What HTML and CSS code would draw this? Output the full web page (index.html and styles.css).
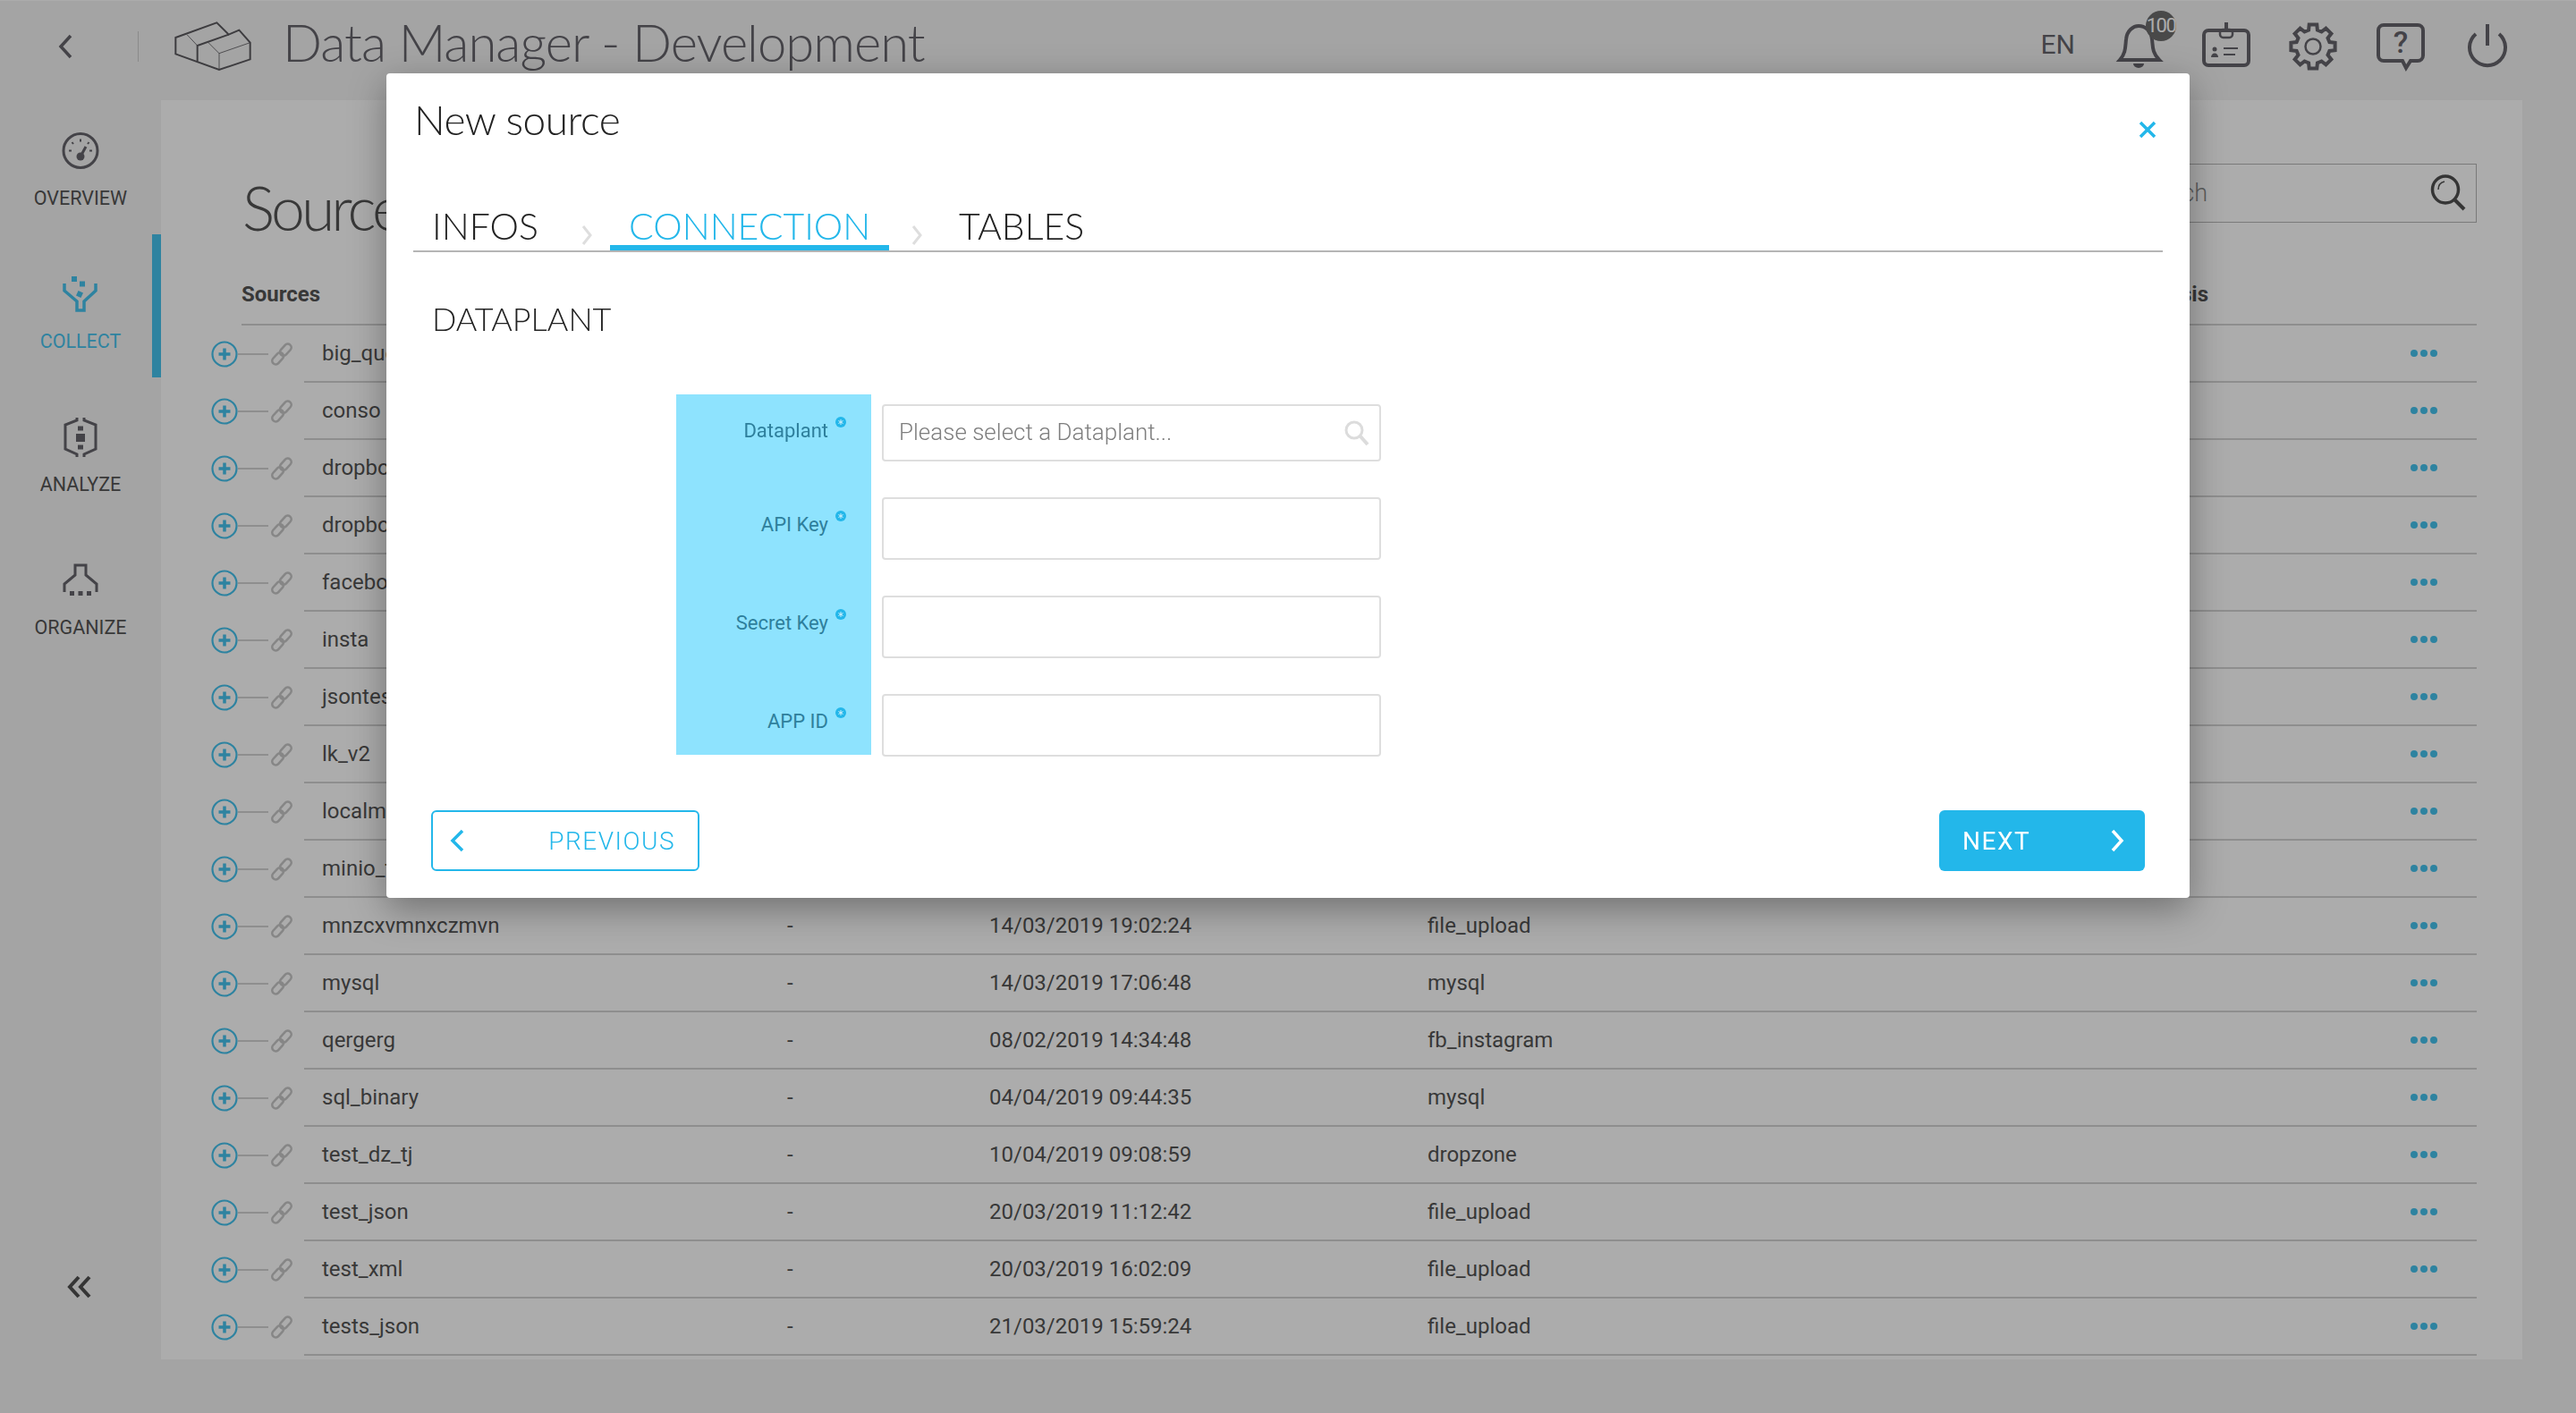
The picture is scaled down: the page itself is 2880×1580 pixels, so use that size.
FILE: index.html
```html
<!DOCTYPE html>
<html lang="en">
<head>
  <meta charset="UTF-8" />
  <title>Data Manager - Development</title>
  <link rel="stylesheet" href="styles.css">
</head>
<body>

  <svg class="defs" width="0" height="0">
    <symbol id="plus" viewBox="0 0 30 30">
      <circle cx="15" cy="15" r="13.500" fill="none" stroke="#23b7ea" stroke-width="2.200" />
      <path d="M15 8.500v13M8.500 15h13" stroke="#23b7ea" stroke-width="3.500" />
    </symbol>
    <symbol id="link" viewBox="0 0 26 26">
      <g transform="rotate(42 13 13)" fill="none" stroke="#bdbdbd" stroke-width="2.600">
        <rect x="9" y="-1" width="8" height="15" rx="4" />
        <rect x="9" y="12" width="8" height="15" rx="4" />
      </g>
    </symbol>
    <symbol id="req" viewBox="0 0 12 12">
      <circle cx="6" cy="6" r="6" fill="#23b7ea" />
      <path d="M6 3v6M3.400 4.500l5.200 3M3.400 7.500l5.200-3" stroke="#cfeffb" stroke-width="1" />
    </symbol>
  </svg>

  <header class="topbar">
    <svg class="back" width="18" height="28" viewBox="0 0 18 28"><path d="M15 2 4 14l11 12" fill="none" stroke="#49474f" stroke-width="3.500" /></svg>
    <span class="topbar-sep"></span>
    <svg class="logo" width="100" height="70" viewBox="0 0 300 210" fill="none" stroke="#3c3a40">
      <path d="M22 75 160 25l40 40 35-15 37 42v56l-104 35-146-53Z" stroke-width="6" />
      <path d="M95 155V102L200 65" stroke-width="6" />
      <path d="M60 65l35 37M130 90l38 38v55M168 128l104-36" stroke-width="2.500" />
    </svg>
    <h1 class="app-title">Data Manager - Development</h1>
    <span class="lang">EN</span>
    <div class="topbar-icons">
      <div class="bell">
        <svg width="60" height="60" viewBox="0 0 60 60" fill="none" stroke="#49474f" stroke-width="4">
          <path d="M8 45C15 37 14 30 15 22 16 12 23 7 29 7c7 0 14 5 15 15 1 8 0 15 8 23Z" />
          <path d="M23 49a6 5 0 0 0 12 0Z" fill="#49474f" stroke="none" />
        </svg>
        <span class="bell-badge">100</span>
      </div>
      <svg width="60" height="60" viewBox="0 0 60 60" fill="none" stroke="#49474f" stroke-width="4">
        <rect x="5" y="12" width="50" height="39" rx="5" />
        <path d="M30 3v8" stroke-width="4" />
        <rect x="23" y="11" width="14" height="9" rx="3.500" stroke-width="2.500" />
        <circle cx="17" cy="33" r="2.500" fill="#49474f" stroke="none" />
        <path d="M13 42c0-6 8-6 8 0Z" fill="#49474f" stroke="none" />
        <path d="M27 32h16M27 39h13" stroke-width="2" />
      </svg>
      <svg width="60" height="60" viewBox="-30 -30 60 60">
        <path fill="none" stroke="#49474f" stroke-width="4" d="M-4.900-18.400-4.300-24.600 4.300-24.600 4.900-18.400 9.500-16.500 14.400-20.400 20.400-14.400 16.500-9.500 18.400-4.900 24.600-4.300 24.600 4.300 18.400 4.900 16.500 9.500 20.400 14.400 14.400 20.400 9.500 16.500 4.900 18.400 4.300 24.600-4.300 24.600-4.900 18.400-9.500 16.500-14.400 20.400-20.400 14.400-16.500 9.500-18.400 4.900-24.600 4.300-24.600-4.300-18.400-4.900-16.500-9.500-20.400-14.400-14.400-20.400-9.500-16.500Z" />
        <circle r="8.500" fill="none" stroke="#49474f" stroke-width="2.500" />
      </svg>
      <svg width="60" height="60" viewBox="0 0 60 60" fill="none" stroke="#49474f" stroke-width="4">
        <path d="M12 6h38a6 6 0 0 1 6 6v28a6 6 0 0 1-6 6h-8l-5 8-4-8H12a6 6 0 0 1-6-6V12a6 6 0 0 1 6-6Z" />
        <text class="help-mark" x="31" y="37" text-anchor="middle" fill="#49474f" stroke="none">?</text>
      </svg>
      <svg width="60" height="60" viewBox="0 0 60 60" fill="none" stroke="#49474f" stroke-width="4">
        <path d="M31 5v24" />
        <path d="M18 16a20 20 0 1 0 26 0" />
      </svg>
    </div>
  </header>

  <div class="layout">
    <nav class="sidebar">
      <a class="nav-item">
        <svg width="60" height="60" viewBox="0 0 60 60" fill="none" stroke="#49474f">
          <circle cx="30" cy="28.500" r="19" stroke-width="3" />
          <path d="M20.500 19l1.500 2M30 15.500v3M39.500 19 38 21M17 28.500h3M40 28.500h3" stroke-width="2" />
          <path d="M30 35 36 24" stroke-width="3" />
          <circle cx="30" cy="35" r="4.500" fill="#49474f" stroke="none" />
        </svg>
        <span>OVERVIEW</span>
      </a>
      <a class="nav-item active">
        <svg width="60" height="60" viewBox="0 0 60 60" fill="none" stroke="#23b7ea">
          <path d="M12 17v8l14 12v10h8V37l13-12v-8" stroke-width="3.500" />
          <g fill="#23b7ea" stroke="none">
            <rect x="20" y="9" width="6" height="6" />
            <rect x="29" y="14.500" width="6" height="6" />
            <rect x="26" y="26" width="6" height="6" transform="rotate(25 29 29)" />
          </g>
        </svg>
        <span>COLLECT</span>
      </a>
      <a class="nav-item">
        <svg width="60" height="60" viewBox="0 0 60 60" fill="none" stroke="#49474f" stroke-width="3">
          <path d="M26 7v3l-13 5v27l13 6v3M34 7v3l13 5v27l-13 6v3" />
          <g fill="#49474f" stroke="none">
            <rect x="27" y="16.500" width="6" height="5" />
            <rect x="25" y="25" width="10" height="9" />
            <rect x="27" y="37.500" width="6" height="5" />
          </g>
        </svg>
        <span>ANALYZE</span>
      </a>
      <a class="nav-item">
        <svg width="60" height="60" viewBox="0 0 60 60" fill="none" stroke="#49474f" stroke-width="3">
          <path d="M12 42V33L24 23V12H36V23L48 33V42" />
          <g fill="#49474f" stroke="none">
            <rect x="18" y="41" width="5" height="5" />
            <rect x="27.500" y="41" width="5" height="5" />
            <rect x="37" y="41" width="5" height="5" />
          </g>
        </svg>
        <span>ORGANIZE</span>
      </a>
      <svg class="collapse" width="30" height="26" viewBox="0 0 30 26" fill="none" stroke="#2f2f2f" stroke-width="4">
        <path d="M14 2 4 13l10 11M26 2 16 13l10 11" />
      </svg>
    </nav>

    <main class="panel">
      <div class="panel-head">
        <h2 class="page-title">Sources</h2>
        <div class="search">
          <input type="text" placeholder="Search" />
          <svg width="42" height="42" viewBox="0 0 42 42" fill="none" stroke="#2f2f2f">
            <ellipse cx="18" cy="17" rx="14.500" ry="15" stroke-width="3.500" />
            <path d="M28 28 39 39" stroke-width="4" />
            <path d="M10 17c0-5 3-8 7-9" stroke-width="1.500" />
          </svg>
        </div>
      </div>

      <div class="thead">
        <span>Sources</span>
        <span class="thead-last">Analysis</span>
      </div>

      <div class="row"><div class="row-tools"><svg class="ic-plus"><use href="#plus" /></svg><span class="connector"></span><svg class="ic-link"><use href="#link" /></svg></div><div class="row-body"><span>big_query</span><span></span><span></span><span></span><span class="dots"><i></i><i></i><i></i></span></div></div>
      <div class="row"><div class="row-tools"><svg class="ic-plus"><use href="#plus" /></svg><span class="connector"></span><svg class="ic-link"><use href="#link" /></svg></div><div class="row-body"><span>conso</span><span></span><span></span><span></span><span class="dots"><i></i><i></i><i></i></span></div></div>
      <div class="row"><div class="row-tools"><svg class="ic-plus"><use href="#plus" /></svg><span class="connector"></span><svg class="ic-link"><use href="#link" /></svg></div><div class="row-body"><span>dropbox</span><span></span><span></span><span></span><span class="dots"><i></i><i></i><i></i></span></div></div>
      <div class="row"><div class="row-tools"><svg class="ic-plus"><use href="#plus" /></svg><span class="connector"></span><svg class="ic-link"><use href="#link" /></svg></div><div class="row-body"><span>dropbox</span><span></span><span></span><span></span><span class="dots"><i></i><i></i><i></i></span></div></div>
      <div class="row"><div class="row-tools"><svg class="ic-plus"><use href="#plus" /></svg><span class="connector"></span><svg class="ic-link"><use href="#link" /></svg></div><div class="row-body"><span>facebook</span><span></span><span></span><span></span><span class="dots"><i></i><i></i><i></i></span></div></div>
      <div class="row"><div class="row-tools"><svg class="ic-plus"><use href="#plus" /></svg><span class="connector"></span><svg class="ic-link"><use href="#link" /></svg></div><div class="row-body"><span>insta</span><span></span><span></span><span></span><span class="dots"><i></i><i></i><i></i></span></div></div>
      <div class="row"><div class="row-tools"><svg class="ic-plus"><use href="#plus" /></svg><span class="connector"></span><svg class="ic-link"><use href="#link" /></svg></div><div class="row-body"><span>jsontest</span><span></span><span></span><span></span><span class="dots"><i></i><i></i><i></i></span></div></div>
      <div class="row"><div class="row-tools"><svg class="ic-plus"><use href="#plus" /></svg><span class="connector"></span><svg class="ic-link"><use href="#link" /></svg></div><div class="row-body"><span>lk_v2</span><span></span><span></span><span></span><span class="dots"><i></i><i></i><i></i></span></div></div>
      <div class="row"><div class="row-tools"><svg class="ic-plus"><use href="#plus" /></svg><span class="connector"></span><svg class="ic-link"><use href="#link" /></svg></div><div class="row-body"><span>localmysql</span><span></span><span></span><span></span><span class="dots"><i></i><i></i><i></i></span></div></div>
      <div class="row"><div class="row-tools"><svg class="ic-plus"><use href="#plus" /></svg><span class="connector"></span><svg class="ic-link"><use href="#link" /></svg></div><div class="row-body"><span>minio_test</span><span></span><span></span><span></span><span class="dots"><i></i><i></i><i></i></span></div></div>
      <div class="row"><div class="row-tools"><svg class="ic-plus"><use href="#plus" /></svg><span class="connector"></span><svg class="ic-link"><use href="#link" /></svg></div><div class="row-body"><span>mnzcxvmnxczmvn</span><span>-</span><span>14/03/2019 19:02:24</span><span>file_upload</span><span class="dots"><i></i><i></i><i></i></span></div></div>
      <div class="row"><div class="row-tools"><svg class="ic-plus"><use href="#plus" /></svg><span class="connector"></span><svg class="ic-link"><use href="#link" /></svg></div><div class="row-body"><span>mysql</span><span>-</span><span>14/03/2019 17:06:48</span><span>mysql</span><span class="dots"><i></i><i></i><i></i></span></div></div>
      <div class="row"><div class="row-tools"><svg class="ic-plus"><use href="#plus" /></svg><span class="connector"></span><svg class="ic-link"><use href="#link" /></svg></div><div class="row-body"><span>qergerg</span><span>-</span><span>08/02/2019 14:34:48</span><span>fb_instagram</span><span class="dots"><i></i><i></i><i></i></span></div></div>
      <div class="row"><div class="row-tools"><svg class="ic-plus"><use href="#plus" /></svg><span class="connector"></span><svg class="ic-link"><use href="#link" /></svg></div><div class="row-body"><span>sql_binary</span><span>-</span><span>04/04/2019 09:44:35</span><span>mysql</span><span class="dots"><i></i><i></i><i></i></span></div></div>
      <div class="row"><div class="row-tools"><svg class="ic-plus"><use href="#plus" /></svg><span class="connector"></span><svg class="ic-link"><use href="#link" /></svg></div><div class="row-body"><span>test_dz_tj</span><span>-</span><span>10/04/2019 09:08:59</span><span>dropzone</span><span class="dots"><i></i><i></i><i></i></span></div></div>
      <div class="row"><div class="row-tools"><svg class="ic-plus"><use href="#plus" /></svg><span class="connector"></span><svg class="ic-link"><use href="#link" /></svg></div><div class="row-body"><span>test_json</span><span>-</span><span>20/03/2019 11:12:42</span><span>file_upload</span><span class="dots"><i></i><i></i><i></i></span></div></div>
      <div class="row"><div class="row-tools"><svg class="ic-plus"><use href="#plus" /></svg><span class="connector"></span><svg class="ic-link"><use href="#link" /></svg></div><div class="row-body"><span>test_xml</span><span>-</span><span>20/03/2019 16:02:09</span><span>file_upload</span><span class="dots"><i></i><i></i><i></i></span></div></div>
      <div class="row"><div class="row-tools"><svg class="ic-plus"><use href="#plus" /></svg><span class="connector"></span><svg class="ic-link"><use href="#link" /></svg></div><div class="row-body"><span>tests_json</span><span>-</span><span>21/03/2019 15:59:24</span><span>file_upload</span><span class="dots"><i></i><i></i><i></i></span></div></div>
    </main>
  </div>

  <div class="overlay"></div>

  <section class="modal">
    <div class="modal-head">
      <h2 class="modal-title">New source</h2>
      <svg class="modal-close" width="20" height="20" viewBox="0 0 20 20"><path d="M2 2 18 18M18 2 2 18" stroke="#23b7ea" stroke-width="3.500" /></svg>
    </div>

    <div class="steps">
      <span class="step">INFOS</span>
      <svg class="step-arrow" width="12" height="22" viewBox="0 0 12 22"><path d="M2 1l8 10-8 10" fill="none" stroke="#dedede" stroke-width="3" /></svg>
      <span class="step current">CONNECTION</span>
      <svg class="step-arrow" width="12" height="22" viewBox="0 0 12 22"><path d="M2 1l8 10-8 10" fill="none" stroke="#dedede" stroke-width="3" /></svg>
      <span class="step">TABLES</span>
    </div>

    <h3 class="section-title">DATAPLANT</h3>

    <form class="conn-form">
      <label class="conn-label">Dataplant <svg class="req"><use href="#req" /></svg></label>
      <div class="conn-field">
        <div class="picker">
          <input type="text" placeholder="Please select a Dataplant..." />
          <svg width="30" height="30" viewBox="0 0 30 30" fill="none" stroke="#dcdcdc">
            <circle cx="12" cy="12" r="9" stroke-width="3" />
            <path d="M19 19l8 9" stroke-width="4" />
          </svg>
        </div>
      </div>

      <label class="conn-label">API Key <svg class="req"><use href="#req" /></svg></label>
      <div class="conn-field"><input class="conn-input" type="text" /></div>

      <label class="conn-label">Secret Key <svg class="req"><use href="#req" /></svg></label>
      <div class="conn-field"><input class="conn-input" type="text" /></div>

      <label class="conn-label">APP ID <svg class="req"><use href="#req" /></svg></label>
      <div class="conn-field"><input class="conn-input" type="text" /></div>
    </form>

    <div class="modal-foot">
      <button class="btn btn-prev" type="button">
        <svg width="16" height="26" viewBox="0 0 16 26"><path d="M14 2 3 13l11 11" fill="none" stroke="#23b7ea" stroke-width="3.500" /></svg>
        <span>PREVIOUS</span>
      </button>
      <button class="btn btn-next" type="button">
        <span>NEXT</span>
        <svg width="16" height="26" viewBox="0 0 16 26"><path d="M3 2l10 11-10 11" fill="none" stroke="#fff" stroke-width="3.500" /></svg>
      </button>
    </div>
  </section>

</body>
</html>
```

FILE: styles.css
```css
* {
  box-sizing: border-box;
}

html, body {
  margin: 0;
  height: 1580px;
  overflow: hidden;
}

body {
  font-family: Roboto, Arial, sans-serif;
  background: #f1f1f1;
  color: #333;
}

.defs {
  display: block;
  height: 0;
}

h1, h2, h3 {
  margin: 0;
  font-family: Lato, sans-serif;
  font-weight: 300;
}

/* top bar */
.topbar {
  height: 102px;
  display: flex;
  align-items: center;
  padding: 0 70px 0 64px;
  border-top: 1px solid #fff;
}

.topbar-sep {
  width: 1px;
  height: 34px;
  background: #c4c4c4;
  margin: 0 34px 0 72px;
}

.app-title {
  margin: 0 0 10px 27px;
  font-size: 58px;
  letter-spacing: -1px;
  color: #49474f;
}

.lang {
  margin: 0 42px 4px auto;
  font-size: 30px;
  color: #49474f;
}

.topbar-icons {
  display: flex;
  gap: 37px;
}

.bell {
  position: relative;
  height: 60px;
}

.bell-badge {
  position: absolute;
  left: 37px;
  top: -10px;
  width: 34px;
  height: 34px;
  border-radius: 50%;
  background: #525252;
  color: #fff;
  font-size: 22px;
  line-height: 34px;
  letter-spacing: -1.500px;
  text-align: center;
}

.help-mark {
  font-family: Roboto, sans-serif;
  font-size: 34px;
  font-weight: 500;
}

/* sidebar */
.layout {
  display: flex;
  height: 1478px;
}

.sidebar {
  width: 180px;
  flex: none;
  display: flex;
  flex-direction: column;
}

.nav-item {
  height: 160px;
  padding-top: 38px;
  display: flex;
  flex-direction: column;
  align-items: center;
  font-size: 21.500px;
  line-height: 26px;
  color: #333;
}

.nav-item span {
  margin-top: 9px;
}

.nav-item.active {
  color: #23b7ea;
  box-shadow: inset -10px 0 0 #23b7ea;
}

.collapse {
  margin: auto 0 128px 74px;
}

/* sources panel */
.panel {
  width: 2640px;
  height: 1408px;
  margin-top: 10px;
  padding: 0 51px 0 56px;
  background: #fff;
}

.panel-head {
  height: 184px;
  padding-left: 35px;
  display: flex;
  justify-content: space-between;
  align-items: flex-start;
}

.page-title {
  margin-top: 80px;
  font-size: 68px;
  line-height: 80px;
  letter-spacing: -4px;
  color: #333;
}

.search {
  width: 414px;
  height: 66px;
  margin-top: 71px;
  padding-right: 10px;
  display: flex;
  align-items: center;
  border: 1px solid #a8a8a8;
}

.search input {
  flex: 1;
  min-width: 0;
  height: 100%;
  padding-left: 30px;
  border: 0;
  background: transparent;
  font: 300 27px Roboto, sans-serif;
}

.thead {
  height: 68px;
  margin-left: 34px;
  display: flex;
  justify-content: space-between;
  align-items: center;
  padding: 0 300px 0 0;
  font-size: 24px;
  font-weight: 700;
  border-bottom: 2px solid #cacaca;
}

.row {
  display: flex;
  height: 64px;
}

.row-tools {
  width: 104px;
  flex: none;
  display: flex;
  align-items: center;
}

.ic-plus {
  width: 30px;
  height: 30px;
  flex: none;
}

.connector {
  width: 34px;
  height: 2px;
  background: #cacaca;
}

.ic-link {
  width: 26px;
  height: 26px;
  margin-left: 2px;
  flex: none;
}

.row-body {
  flex: 1;
  display: grid;
  grid-template-columns: 520px 226px 490px 1fr auto;
  align-items: center;
  padding: 0 44px 0 20px;
  font-size: 24px;
  border-bottom: 2px solid #cacaca;
}

.dots {
  display: flex;
  gap: 3px;
}

.dots i {
  width: 8px;
  height: 8px;
  border-radius: 50%;
  background: #23b7ea;
}

/* dims everything under the modal */
.overlay {
  position: fixed;
  inset: 0;
  background: rgba(63, 63, 63, 0.43);
}

.modal {
  position: absolute;
  left: 432px;
  top: 82px;
  width: 2016px;
  height: 922px;
  background: #fff;
  border-radius: 4px;
  box-shadow: 0 12px 40px rgba(0, 0, 0, 0.35);
}

.modal-head {
  height: 128px;
  padding: 24px 37px 0 31px;
  display: flex;
  justify-content: space-between;
  align-items: flex-start;
}

.modal-title {
  font-size: 46px;
  line-height: 56px;
  letter-spacing: -0.500px;
  color: #222;
}

.modal-close {
  margin-top: 29px;
}

.steps {
  margin: 0 30px;
  display: flex;
  align-items: flex-end;
  border-bottom: 2px solid #b5b5b5;
}

.step {
  height: 70px;
  padding: 21px 0 0 21px;
  font-family: Lato, sans-serif;
  font-weight: 300;
  font-size: 41px;
  line-height: 44px;
  color: #222;
  border-bottom: 6px solid transparent;
}

.step:first-child {
  width: 163px;
}

.step.current {
  width: 312px;
  padding-left: 21px;
  color: #23b7ea;
  border-bottom-color: #23b7ea;
}

.step-arrow {
  margin: 0 20px 6px 25px;
}

.section-title {
  margin: 54px 0 0 51px;
  font-size: 36px;
  line-height: 40px;
  color: #222;
}

.conn-form {
  margin: 65px 0 0 324px;
  display: grid;
  grid-template-columns: 218px 558px;
  grid-template-rows: 105px 110px 110px 78px;
  column-gap: 12px;
  width: 788px;
}

.conn-label {
  padding: 27px 28px 0 0;
  display: flex;
  justify-content: flex-end;
  align-items: flex-start;
  gap: 8px;
  background: #8ee3fe;
  color: #2e7f9c;
  font-size: 22px;
  line-height: 28px;
}

.req {
  width: 12px;
  height: 12px;
  margin-top: -2px;
}

.conn-field {
  padding-top: 10px;
}

.conn-input {
  display: block;
  width: 100%;
  height: 70px;
  border: 2px solid #dedede;
  border-radius: 4px;
  background: #fff;
}

.picker {
  height: 64px;
  margin-top: 1px;
  padding-right: 10px;
  display: flex;
  align-items: center;
  border: 2px solid #dedede;
  border-radius: 4px;
}

.picker input {
  flex: 1;
  min-width: 0;
  margin-bottom: 2px;
  padding-left: 17px;
  border: 0;
  font: 300 26px Roboto, sans-serif;
}

.picker input::placeholder {
  color: #7e7e7e;
  opacity: 1;
}

.modal-foot {
  margin-top: 62px;
  padding: 0 50px;
  display: flex;
  justify-content: space-between;
}

.btn {
  height: 68px;
  display: flex;
  justify-content: space-between;
  align-items: center;
  border-radius: 6px;
  font-family: Roboto, sans-serif;
  font-size: 28px;
  letter-spacing: 1.500px;
}

.btn-prev {
  width: 300px;
  padding: 0 25px 0 19px;
  border: 2px solid #23b7ea;
  background: #fff;
  color: #23b7ea;
  font-weight: 300;
}

.btn-next {
  width: 230px;
  padding: 0 23px 0 26px;
  border: 0;
  background: #23b7ea;
  color: #fff;
}
```
